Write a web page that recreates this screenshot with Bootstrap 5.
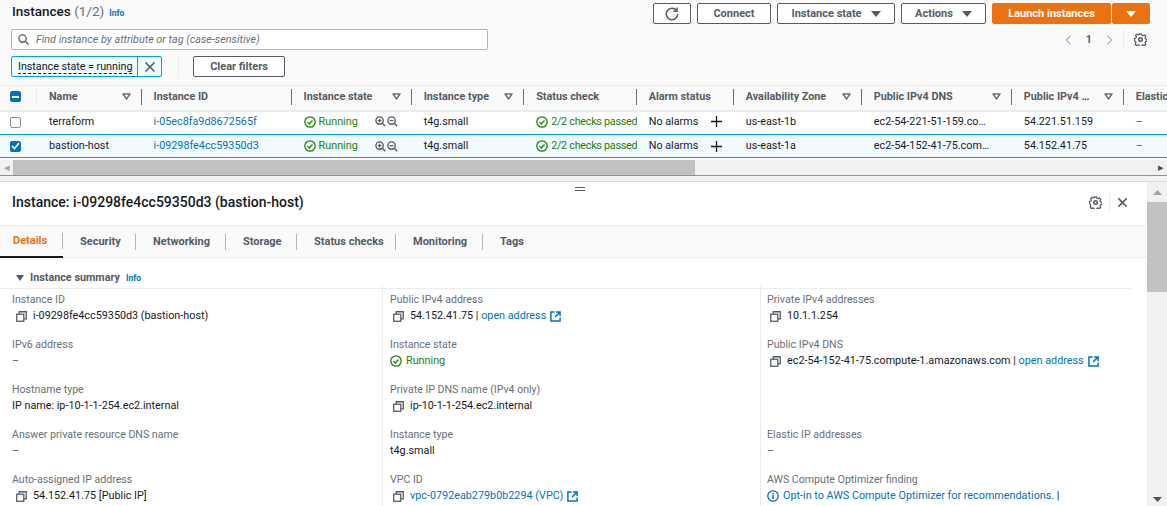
<!DOCTYPE html>
<html lang="en">
<head>
<meta charset="utf-8">
<title>Instances</title>
<link rel="stylesheet" href="https://cdn.jsdelivr.net/npm/bootstrap@5.3.0/dist/css/bootstrap.min.css">
<style>
html,body{height:506px;overflow:hidden;margin:0}
body{font-family:Roboto,"Liberation Sans",sans-serif;font-size:10.8px;color:#16191f;background:#fafafa;line-height:14px}
svg{display:block;flex:none}
.top-zone{height:176px;border-bottom:1px solid #879596;overflow:hidden}
.head-row{height:29px;padding:3px 17px 0 12px}
.page-title{font-size:13.5px;font-weight:500;line-height:17px;margin:0}
.page-title span{font-weight:400;color:#687078}
.info-link{font-size:8.5px;font-weight:700;color:#0073bb;text-decoration:none;margin-left:5px}
.btn-strip{gap:6px}
.launch-pair{gap:1px}
.aws-btn{height:21px;padding:0;border:1px solid #545b64;border-radius:2px;background:#fff;color:#545b64;font-size:11px;font-weight:700;line-height:19px;display:flex;align-items:center;justify-content:center;gap:9px}
.aws-btn:hover{background:#fff;color:#545b64;border-color:#545b64}
.tri{width:0;height:0;border-left:5px solid transparent;border-right:5px solid transparent;border-top:6px solid currentColor}
.w-refresh{width:38px}.w-connect{width:74px}.w-state{width:118px}.w-actions{width:85px}.w-launch{width:119px}.w-caret{width:38px}
.w-launch,.w-caret{background:#ec7211;border-color:#ec7211;color:#fff}
.w-launch:hover,.w-caret:hover{background:#ec7211;border-color:#ec7211;color:#fff}
.w-clear{width:92px}
.search-row{height:27px;padding:0 20px 0 11px}
.search-box{width:477px;height:21px;border:1px solid #aab7b8;border-radius:2px;background:#fff;padding:0 6px;gap:7px;color:#687078;font-style:italic}
.pager{color:#545b64;font-weight:700;height:21px}
.pager-num{margin:0 14px}
.pager-sep{border-left:1px solid #eaeded;height:21px;margin:0 10px}
.filter-row{height:29px;padding-left:11px}
.token{width:151px;height:21px;border:1px solid #00a1c9;background:#f1faff;border-radius:2px}
.token-text{flex:1;padding-left:6px;border-right:1px solid #00a1c9;height:100%;line-height:19px;color:#16191f;letter-spacing:-.05px}
.token-text span{border-bottom:1px dashed #16191f}
.token-x{width:23px;display:flex;align-items:center;justify-content:center}
.filter-sep{border-left:1px solid #eaeded;height:21px;margin:0 14px 0 16px}
.grid-wrap{overflow:hidden;width:1167px}
.inst-table{table-layout:fixed;width:1240px;margin:0;border-collapse:collapse;--bs-table-bg:transparent;color:#16191f;font-size:10.8px}
.inst-table th,.inst-table td{padding:0 0 0 12px;vertical-align:middle;white-space:nowrap;overflow:hidden;border:0}
.inst-table thead th{height:25px;background:#fafafa;color:#545b64;font-weight:700;border-top:1px solid #eaeded;border-bottom:2px solid #eaeded;padding-bottom:2px}
.inst-table tbody td{height:24px;background:#fff;padding-bottom:2px}
.inst-table tbody td.first-col{padding-bottom:0}
.inst-table tbody tr.chosen td{height:23px;background:#f1faff;border-top:1px solid #00a1c9;border-bottom:1px solid #00a1c9;padding-bottom:0}
.th-in{display:flex;align-items:center;justify-content:space-between;height:16px;border-right:1px solid #687078;padding-right:10px}
.th-none{border-right:0}
.first-col{padding-left:10px!important}
.th-first{height:16px;border-right:1px solid #eaeded;display:flex;align-items:center}
.sort-tri{width:9px;height:7px;flex:none}
.box{width:11px;height:11px;border:1px solid #879596;border-radius:2px;background:#fff;display:flex;align-items:center;justify-content:center}
.box-on{background:#0073bb;border-color:#0073bb}
.id-link{color:#0073bb;text-decoration:none}
.ok{color:#1d8102}
.tight-ok{letter-spacing:-.28px}
.state-cell{display:flex;align-items:center;gap:3px}
.zoomers{margin-left:14px;gap:1px}
.plus-ico{margin-left:13px}
.muted-dash{color:#545b64}
.h-scroll{height:15px;margin-top:2px;background:#f1f1f1;display:flex;align-items:center}
.arrow-box{width:13px;display:flex;justify-content:center;color:#a3a3a3}
.thumb-h{width:682px;height:15px;background:#c1c1c1}
.arrow-r{margin-left:auto;color:#505050}
.gap-band{height:6px;background:#f2f3f3;border-bottom:1px solid #d5dbdb}
.lower{height:324px;background:#fff;position:relative;overflow:hidden}
.lower-main{flex:1;min-width:0}
.drag-mark{position:absolute;left:575px;top:5px;width:10px;height:4px;border-top:1px solid #545b64;border-bottom:1px solid #545b64}
.panel-head{height:44px;padding:0 19px 3px 12px;border-bottom:1px solid #eaeded}
.panel-title{font-size:14px;font-weight:500;margin:0;color:#16191f;line-height:17px}
.head-sep{border-left:1px solid #eaeded;height:18px;margin:0 7px}
.tab-bar{height:32px;background:#fafafa;border-bottom:1px solid #eaeded}
.tab-item{height:32px;display:flex;align-items:center;padding:0;color:#545b64;font-weight:700;font-size:11px}
.tab-item b{display:block;font-weight:700;height:16px;line-height:16px;border-right:1px solid #aab7b8;width:100%;padding-left:var(--tp,17px)}
.tab-last b{border-right:0}
.tab-on{color:#ec7211;border-bottom:2px solid #16191f}
.tb1{width:63px;--tp:13px}.tb2{width:73px}.tb3{width:90px}.tb4{width:71px}.tb5{width:99px}.tb6{width:87px}.tb7{width:70px}
.sum-title{height:30px;padding:13px 0 0 16px;color:#545b64;font-weight:700;gap:6px}
.sum-title .info-link{margin-left:0}
.sum-tri{width:0;height:0;border-left:4px solid transparent;border-right:4px solid transparent;border-top:6px solid #545b64}
.detail-grid{display:grid;grid-template-columns:382px 378px 371px;width:1131px;border-top:1px solid #eaeded;height:240px}
.detail-col{padding:3px 0 0 7px;border-left:1px solid #eaeded;margin-top:-3px}
.detail-col:first-child{border-left:0;padding-left:12px}
.detail-col+.detail-col .copy-ico{margin-left:3px}
.detail-col:last-child{padding-left:6px}
.kv{height:45px;padding-top:3px}
.kv-label{color:#687078;line-height:16px;height:16px;white-space:nowrap;font-size:10.6px}
.kv-val{line-height:16px;height:16px;white-space:nowrap;display:flex;align-items:center;gap:6px}
.kv-val a{color:#0073bb;text-decoration:none}
.kv-val .ext-ico{margin-left:-2px}
.copy-ico{margin-left:4px}
.v-scroll{width:20px;background:#f1f1f1;display:flex;flex-direction:column;align-items:center}
.v-arrow{height:20px;display:flex;align-items:center;justify-content:center;flex:none}
.thumb-v{width:100%;height:90px;background:#c1c1c1}
.v-end{margin-top:auto;height:14px}
</style>
</head>
<body>
<svg width="0" height="0" style="position:absolute">
<defs>
<symbol id="i-gear" viewBox="0 0 16 16"><circle cx="8" cy="8" r="2.200" fill="none" stroke="#545b64" stroke-width="1.800"/><path d="M6.700 1h2.600l.4 1.800 1.500.6 1.600-1 1.800 1.800-1 1.600.6 1.500 1.800.4v2.600l-1.800.4-.6 1.500 1 1.600-1.800 1.800-1.600-1-1.500.6-.4 1.800H6.700l-.4-1.800-1.500-.6-1.600 1-1.800-1.800 1-1.600-.6-1.500L0.500 9.300V6.700l1.800-.4.6-1.500-1-1.600 1.800-1.800 1.600 1 1.500-.6z" fill="none" stroke="#545b64" stroke-width="1.500" stroke-linejoin="round"/></symbol>
<symbol id="i-x" viewBox="0 0 12 12"><path d="M1.500 1.500l9 9M10.500 1.500l-9 9" stroke="#545b64" stroke-width="1.600" fill="none"/></symbol>
<symbol id="i-copy" viewBox="0 0 12 12"><path d="M3.500 3.500V.8h7.700v7.700H8.500" fill="none" stroke="#545b64" stroke-width="1.400"/><rect x=".8" y="3.500" width="7.700" height="7.700" fill="none" stroke="#545b64" stroke-width="1.400"/></symbol>
<symbol id="i-ext" viewBox="0 0 12 12"><path d="M5 1H1v10h10V7M6.500 1H11v4.500M11 1L5.500 6.500" fill="none" stroke="#0073bb" stroke-width="1.600"/></symbol>
<symbol id="i-ok" viewBox="0 0 12 12"><circle cx="6" cy="6" r="5.200" fill="none" stroke="#1d8102" stroke-width="1.300"/><path d="M3.500 6.200L5.300 8l3.200-3.500" fill="none" stroke="#1d8102" stroke-width="1.300"/></symbol>
<symbol id="i-zin" viewBox="0 0 12 12"><circle cx="5" cy="5" r="4" fill="none" stroke="#545b64" stroke-width="1.500"/><path d="M8 8l3.200 3.200M3 5h4M5 3v4" stroke="#545b64" stroke-width="1.500" fill="none"/></symbol>
<symbol id="i-zout" viewBox="0 0 12 12"><circle cx="5" cy="5" r="4" fill="none" stroke="#545b64" stroke-width="1.500"/><path d="M8 8l3.200 3.200M3 5h4" stroke="#545b64" stroke-width="1.500" fill="none"/></symbol>
<symbol id="i-sort" viewBox="0 0 9 7"><path d="M1 1h7L4.500 6z" fill="none" stroke="#687078" stroke-width="1.400" stroke-linejoin="round"/></symbol>
</defs>
</svg>

<section class="top-zone">
  <div class="head-row d-flex justify-content-between align-items-start">
    <h1 class="page-title">Instances <span>(1/2)</span><a class="info-link" href="#">Info</a></h1>
    <div class="d-flex btn-strip">
      <button class="btn aws-btn w-refresh" aria-label="Refresh"><svg width="14" height="14" viewBox="0 0 14 14"><path d="M11.500 3.500A5.700 5.700 0 1 0 12.700 7" fill="none" stroke="#545b64" stroke-width="1.500"/><path d="M12 .6v3.600H8.400" fill="none" stroke="#545b64" stroke-width="1.500"/></svg></button>
      <button class="btn aws-btn w-connect">Connect</button>
      <button class="btn aws-btn w-state">Instance state <i class="tri"></i></button>
      <button class="btn aws-btn w-actions">Actions <i class="tri"></i></button>
      <div class="d-flex launch-pair">
        <button class="btn aws-btn w-launch">Launch instances</button>
        <button class="btn aws-btn w-caret" aria-label="More"><i class="tri"></i></button>
      </div>
    </div>
  </div>
  <div class="search-row d-flex justify-content-between align-items-start">
    <div class="search-box d-flex align-items-center">
      <svg width="11" height="11" viewBox="0 0 12 12"><circle cx="5" cy="5" r="4" fill="none" stroke="#545b64" stroke-width="1.400"/><path d="M8 8l3.500 3.500" stroke="#545b64" stroke-width="1.400"/></svg>
      <span>Find instance by attribute or tag (case-sensitive)</span>
    </div>
    <div class="pager d-flex align-items-center">
      <svg width="7" height="12" viewBox="0 0 8 12"><path d="M6.500 1L1.500 6l5 5" fill="none" stroke="#aab7b8" stroke-width="1.400"/></svg>
      <span class="pager-num">1</span>
      <svg width="7" height="12" viewBox="0 0 8 12"><path d="M1.500 1l5 5-5 5" fill="none" stroke="#aab7b8" stroke-width="1.400"/></svg>
      <i class="pager-sep"></i>
      <svg width="13" height="13"><use href="#i-gear"/></svg>
    </div>
  </div>
  <div class="filter-row d-flex align-items-start">
    <div class="token d-flex">
      <div class="token-text"><span>Instance state = running</span></div>
      <div class="token-x"><svg width="12" height="12"><use href="#i-x"/></svg></div>
    </div>
    <i class="filter-sep"></i>
    <button class="btn aws-btn w-clear">Clear filters</button>
  </div>
  <div class="grid-wrap">
    <table class="table inst-table">
      <colgroup><col style="width:37px"><col style="width:104.500px"><col style="width:150px"><col style="width:120px"><col style="width:112.500px"><col style="width:112.500px"><col style="width:97px"><col style="width:128px"><col style="width:150px"><col style="width:112px"><col style="width:116px"></colgroup>
      <thead>
        <tr>
          <th class="first-col"><div class="th-first"><span class="box box-on"><svg width="7" height="2" viewBox="0 0 7 2"><rect width="7" height="2" fill="#fff"/></svg></span></div></th>
          <th><div class="th-in">Name<svg class="sort-tri"><use href="#i-sort"/></svg></div></th>
          <th><div class="th-in">Instance ID</div></th>
          <th><div class="th-in">Instance state<svg class="sort-tri"><use href="#i-sort"/></svg></div></th>
          <th><div class="th-in">Instance type<svg class="sort-tri"><use href="#i-sort"/></svg></div></th>
          <th><div class="th-in">Status check</div></th>
          <th><div class="th-in">Alarm status</div></th>
          <th><div class="th-in">Availability Zone<svg class="sort-tri"><use href="#i-sort"/></svg></div></th>
          <th><div class="th-in">Public IPv4 DNS<svg class="sort-tri"><use href="#i-sort"/></svg></div></th>
          <th><div class="th-in">Public IPv4 …<svg class="sort-tri"><use href="#i-sort"/></svg></div></th>
          <th><div class="th-in th-none">Elastic IP</div></th>
        </tr>
      </thead>
      <tbody>
        <tr>
          <td class="first-col"><span class="box"></span></td>
          <td>terraform</td>
          <td><a class="id-link" href="#">i-05ec8fa9d8672565f</a></td>
          <td><div class="state-cell"><svg width="12" height="12"><use href="#i-ok"/></svg><span class="ok">Running</span><span class="d-flex zoomers"><svg width="11" height="11"><use href="#i-zin"/></svg><svg width="11" height="11"><use href="#i-zout"/></svg></span></div></td>
          <td>t4g.small</td>
          <td><div class="state-cell"><svg width="12" height="12"><use href="#i-ok"/></svg><span class="ok tight-ok">2/2 checks passed</span></div></td>
          <td><div class="d-flex align-items-center">No alarms<svg class="plus-ico" width="11" height="11" viewBox="0 0 11 11"><path d="M5.500 0v11M0 5.500h11" stroke="#16191f" stroke-width="1.300"/></svg></div></td>
          <td>us-east-1b</td>
          <td>ec2-54-221-51-159.co…</td>
          <td>54.221.51.159</td>
          <td class="muted-dash">–</td>
        </tr>
        <tr class="chosen">
          <td class="first-col"><span class="box box-on"><svg width="9" height="8" viewBox="0 0 9 8"><path d="M1 4l2.500 2.500L8 1" fill="none" stroke="#fff" stroke-width="1.600"/></svg></span></td>
          <td>bastion-host</td>
          <td><a class="id-link" href="#">i-09298fe4cc59350d3</a></td>
          <td><div class="state-cell"><svg width="12" height="12"><use href="#i-ok"/></svg><span class="ok">Running</span><span class="d-flex zoomers"><svg width="11" height="11"><use href="#i-zin"/></svg><svg width="11" height="11"><use href="#i-zout"/></svg></span></div></td>
          <td>t4g.small</td>
          <td><div class="state-cell"><svg width="12" height="12"><use href="#i-ok"/></svg><span class="ok tight-ok">2/2 checks passed</span></div></td>
          <td><div class="d-flex align-items-center">No alarms<svg class="plus-ico" width="11" height="11" viewBox="0 0 11 11"><path d="M5.500 0v11M0 5.500h11" stroke="#16191f" stroke-width="1.300"/></svg></div></td>
          <td>us-east-1a</td>
          <td>ec2-54-152-41-75.com…</td>
          <td>54.152.41.75</td>
          <td class="muted-dash">–</td>
        </tr>
      </tbody>
    </table>
  </div>
  <div class="h-scroll">
    <span class="arrow-box">◂</span>
    <div class="thumb-h"></div>
    <span class="arrow-box arrow-r">▸</span>
  </div>
</section>
<div class="gap-band"></div>
<section class="lower d-flex">
  <i class="drag-mark"></i>
  <div class="lower-main">
    <div class="panel-head d-flex justify-content-between align-items-center">
      <h2 class="panel-title">Instance: i-09298fe4cc59350d3 (bastion-host)</h2>
      <div class="d-flex align-items-center">
        <svg width="13" height="13"><use href="#i-gear"/></svg>
        <i class="head-sep"></i>
        <svg width="11" height="11"><use href="#i-x"/></svg>
      </div>
    </div>
    <div class="tab-bar d-flex">
      <div class="tab-item tab-on tb1"><b>Details</b></div>
      <div class="tab-item tb2"><b>Security</b></div>
      <div class="tab-item tb3"><b>Networking</b></div>
      <div class="tab-item tb4"><b>Storage</b></div>
      <div class="tab-item tb5"><b>Status checks</b></div>
      <div class="tab-item tb6"><b>Monitoring</b></div>
      <div class="tab-item tab-last tb7"><b>Tags</b></div>
    </div>
    <div class="sum-title d-flex align-items-start">
      <i class="sum-tri mt-1"></i><span>Instance summary</span><a class="info-link" href="#">Info</a>
    </div>
    <div class="detail-grid">
      <div class="detail-col">
        <div class="kv"><div class="kv-label">Instance ID</div><div class="kv-val"><svg class="copy-ico" width="11" height="11"><use href="#i-copy"/></svg>i-09298fe4cc59350d3 (bastion-host)</div></div>
        <div class="kv"><div class="kv-label">IPv6 address</div><div class="kv-val muted-dash">–</div></div>
        <div class="kv"><div class="kv-label">Hostname type</div><div class="kv-val">IP name: ip-10-1-1-254.ec2.internal</div></div>
        <div class="kv"><div class="kv-label">Answer private resource DNS name</div><div class="kv-val muted-dash">–</div></div>
        <div class="kv"><div class="kv-label">Auto-assigned IP address</div><div class="kv-val"><svg class="copy-ico" width="11" height="11"><use href="#i-copy"/></svg>54.152.41.75 [Public IP]</div></div>
      </div>
      <div class="detail-col">
        <div class="kv"><div class="kv-label">Public IPv4 address</div><div class="kv-val"><svg class="copy-ico" width="11" height="11"><use href="#i-copy"/></svg><span>54.152.41.75 | <a href="#">open address</a></span><svg class="ext-ico" width="11" height="11"><use href="#i-ext"/></svg></div></div>
        <div class="kv"><div class="kv-label">Instance state</div><div class="kv-val gap-1"><svg width="12" height="12"><use href="#i-ok"/></svg><span class="ok">Running</span></div></div>
        <div class="kv"><div class="kv-label">Private IP DNS name (IPv4 only)</div><div class="kv-val"><svg class="copy-ico" width="11" height="11"><use href="#i-copy"/></svg>ip-10-1-1-254.ec2.internal</div></div>
        <div class="kv"><div class="kv-label">Instance type</div><div class="kv-val">t4g.small</div></div>
        <div class="kv"><div class="kv-label">VPC ID</div><div class="kv-val"><svg class="copy-ico" width="11" height="11"><use href="#i-copy"/></svg><a href="#">vpc-0792eab279b0b2294 (VPC)</a><svg class="ext-ico" width="11" height="11"><use href="#i-ext"/></svg></div></div>
      </div>
      <div class="detail-col">
        <div class="kv"><div class="kv-label">Private IPv4 addresses</div><div class="kv-val"><svg class="copy-ico" width="11" height="11"><use href="#i-copy"/></svg>10.1.1.254</div></div>
        <div class="kv"><div class="kv-label">Public IPv4 DNS</div><div class="kv-val"><svg class="copy-ico" width="11" height="11"><use href="#i-copy"/></svg><span>ec2-54-152-41-75.compute-1.amazonaws.com | <a href="#">open address</a></span><svg class="ext-ico" width="11" height="11"><use href="#i-ext"/></svg></div></div>
        <div class="kv"></div>
        <div class="kv"><div class="kv-label">Elastic IP addresses</div><div class="kv-val muted-dash">–</div></div>
        <div class="kv"><div class="kv-label">AWS Compute Optimizer finding</div><div class="kv-val gap-1"><svg width="12" height="12" viewBox="0 0 12 12"><circle cx="6" cy="6" r="5.200" fill="none" stroke="#0073bb" stroke-width="1.300"/><path d="M6 5v4M6 3v1.300" stroke="#0073bb" stroke-width="1.500"/></svg><span><a href="#">Opt-in to AWS Compute Optimizer for recommendations.</a> |</span></div></div>
      </div>
    </div>
  </div>
  <div class="v-scroll">
    <div class="v-arrow"><svg width="9" height="5" viewBox="0 0 9 5"><path d="M4.500 0L9 5H0z" fill="#a3a3a3"/></svg></div>
    <div class="thumb-v"></div>
    <div class="v-arrow v-end"><svg width="9" height="5" viewBox="0 0 9 5"><path d="M4.500 5L9 0H0z" fill="#505050"/></svg></div>
  </div>
</section>
<script src="https://cdn.jsdelivr.net/npm/bootstrap@5.3.0/dist/js/bootstrap.bundle.min.js"></script>
</body>
</html>
